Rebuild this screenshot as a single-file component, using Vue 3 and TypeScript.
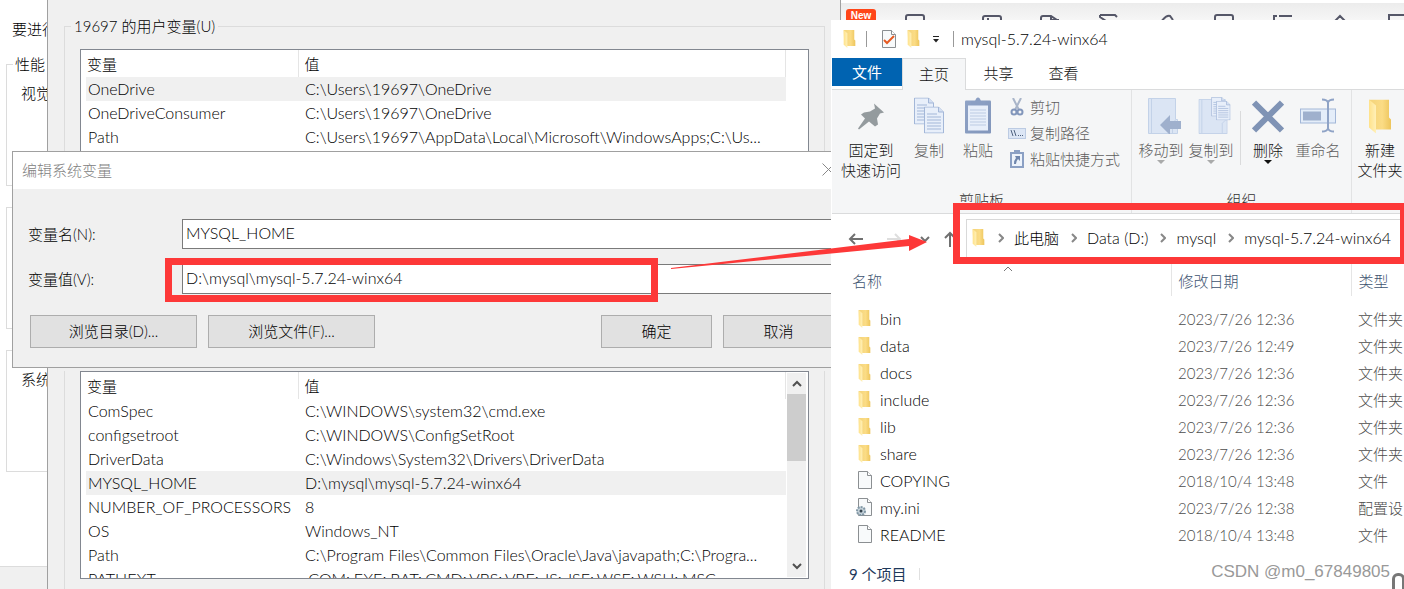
<script setup lang="ts">
interface Row { name: string; value: string; selected?: boolean }
interface FileRow { name: string; kind: 'folder' | 'file' | 'config'; date: string; type: string }

const userVars: Row[] = [
  { name: 'OneDrive', value: 'C:\\Users\\19697\\OneDrive', selected: true },
  { name: 'OneDriveConsumer', value: 'C:\\Users\\19697\\OneDrive' },
  { name: 'Path', value: 'C:\\Users\\19697\\AppData\\Local\\Microsoft\\WindowsApps;C:\\Us...' },
]
const systemVars: Row[] = [
  { name: 'ComSpec', value: 'C:\\WINDOWS\\system32\\cmd.exe' },
  { name: 'configsetroot', value: 'C:\\WINDOWS\\ConfigSetRoot' },
  { name: 'DriverData', value: 'C:\\Windows\\System32\\Drivers\\DriverData' },
  { name: 'MYSQL_HOME', value: 'D:\\mysql\\mysql-5.7.24-winx64', selected: true },
  { name: 'NUMBER_OF_PROCESSORS', value: '8' },
  { name: 'OS', value: 'Windows_NT' },
  { name: 'Path', value: 'C:\\Program Files\\Common Files\\Oracle\\Java\\javapath;C:\\Progra...' },
  { name: 'PATHEXT', value: '.COM;.EXE;.BAT;.CMD;.VBS;.VBE;.JS;.JSE;.WSF;.WSH;.MSC' },
]
const files: FileRow[] = [
  { name: 'bin', kind: 'folder', date: '2023/7/26 12:36', type: '文件夹' },
  { name: 'data', kind: 'folder', date: '2023/7/26 12:49', type: '文件夹' },
  { name: 'docs', kind: 'folder', date: '2023/7/26 12:36', type: '文件夹' },
  { name: 'include', kind: 'folder', date: '2023/7/26 12:36', type: '文件夹' },
  { name: 'lib', kind: 'folder', date: '2023/7/26 12:36', type: '文件夹' },
  { name: 'share', kind: 'folder', date: '2023/7/26 12:36', type: '文件夹' },
  { name: 'COPYING', kind: 'file', date: '2018/10/4 13:48', type: '文件' },
  { name: 'my.ini', kind: 'config', date: '2023/7/26 12:38', type: '配置设' },
  { name: 'README', kind: 'file', date: '2018/10/4 13:48', type: '文件' },
]
const crumbs = ['此电脑', 'Data (D:)', 'mysql', 'mysql-5.7.24-winx64']
const toolGlyphs = [
  'M-8 6h14',
  'M1 8V3q0-2 2-2h14q2 0 2 2v5',
  'M1 8V4q0-2 2-2h14q2 0 2 2v4M5 5h2',
  'M1 8V4q0-2 2-2h8l6 4v2M11 2v4h8',
  'M2 1h15l2 2M2 1v2l6 4',
  'M5 8q5-7 9-6l3 4',
  'M1 8V3q0-2 2-2h14q2 0 2 2v5',
  'M2 1v7M7 2h13M1 2h4',
  'M4 8l6-6 6 6M8 7h4',
  'M1 8V1h20M12 7h6V5',
]
</script>

<template>
  <main class="desktop">
    <section class="system-window">
      <p class="notice">要进行</p>
      <fieldset class="perf"><legend>性能</legend><span>视觉</span></fieldset>
      <fieldset class="profiles"></fieldset>
      <fieldset class="startup"><span>系统</span></fieldset>
      <footer></footer>
    </section>

    <nav class="toolstrip">
      <button v-for="(d, i) in toolGlyphs" :key="i" type="button" :aria-label="`tool ${i + 1}`">
        <svg viewBox="0 0 20 8" width="20" height="8"><path :d="d" /></svg>
      </button>
      <span class="new-badge">New</span>
    </nav>

    <section class="env-window">
      <fieldset class="user-group">
        <legend>19697 的用户变量(U)</legend>
        <div class="listbox">
          <table class="vars">
            <thead><tr><th class="var-name">变量</th><th>值</th></tr></thead>
            <tbody>
              <tr v-for="r in userVars" :key="r.name" :class="{ selected: r.selected }">
                <td>{{ r.name }}</td><td>{{ r.value }}</td>
              </tr>
            </tbody>
          </table>
        </div>
      </fieldset>
      <fieldset class="system-group">
        <div class="listbox">
          <table class="vars">
            <thead><tr><th class="var-name">变量</th><th>值</th></tr></thead>
            <tbody>
              <tr v-for="r in systemVars" :key="r.name" :class="{ selected: r.selected }">
                <td>{{ r.name }}</td><td>{{ r.value }}</td>
              </tr>
            </tbody>
          </table>
          <div class="scrollbar">
            <button type="button" aria-label="向上"><svg viewBox="0 0 10 7" width="10" height="7"><path d="M1 6l4-4 4 4" /></svg></button>
            <div class="thumb"></div>
            <button type="button" class="down" aria-label="向下"><svg viewBox="0 0 10 7" width="10" height="7"><path d="M1 1l4 4 4-4" /></svg></button>
          </div>
        </div>
      </fieldset>
    </section>

    <section class="dialog">
      <header>
        <h2>编辑系统变量</h2>
        <button type="button" aria-label="关闭"><svg viewBox="0 0 13 13" width="13" height="13"><path d="M.5.5l12 12M12.500.5l-12 12" /></svg></button>
      </header>
      <form @submit.prevent>
        <label for="var-name">变量名(N):</label>
        <input id="var-name" type="text" value="MYSQL_HOME" />
        <label for="var-value">变量值(V):</label>
        <input id="var-value" type="text" value="D:\mysql\mysql-5.7.24-winx64" />
        <div class="actions">
          <button type="button" class="wide">浏览目录(D)...</button>
          <button type="button" class="wide">浏览文件(F)...</button>
          <span class="fill"></span>
          <button type="submit">确定</button>
          <button type="button">取消</button>
        </div>
      </form>
    </section>

    <section class="explorer">
      <svg class="defs" width="0" height="0" aria-hidden="true">
        <defs>
          <linearGradient id="fold" x1="0" x2="1"><stop offset="0" stop-color="#f3d37a" /><stop offset=".6" stop-color="#fbdc85" /><stop offset="1" stop-color="#edc55c" /></linearGradient>
          <linearGradient id="flap" x1="0" x2="1"><stop offset="0" stop-color="#ffe28a" /><stop offset="1" stop-color="#fff0b8" /></linearGradient>
          <linearGradient id="board" x1="0" y1="0" x2="1" y2="1"><stop offset="0" stop-color="#8fa3c6" /><stop offset="1" stop-color="#8296bb" /></linearGradient>
          <symbol id="folder" viewBox="0 0 24 34"><path d="M1 0h20v18l2 2v10H8L2 24z" fill="url(#fold)" /><path d="M1 0l7 6v28l-7-6z" fill="url(#flap)" /></symbol>
          <symbol id="page" viewBox="0 0 16 19"><path d="M1.500.5h9l4 4v13h-13z" fill="#f8fafb" stroke="#8b8f92" /><path d="M10.500.5v4h4" fill="#fff" stroke="#8b8f92" /></symbol>
          <symbol id="doc" viewBox="0 0 20 27"><path d="M.5.5h14l5 5v21H.5z" fill="#e8effa" stroke="#a3b7d8" /><path d="M14.500.5v5h5" fill="#d5e0f2" stroke="#a3b7d8" /><path d="M3 7.500h10M3 10.500h14M3 13.500h14M3 16.500h14M3 19.500h14M3 22.500h14" stroke="#a3b7d8" /></symbol>
          <symbol id="bluefolder" viewBox="0 0 30 36"><path d="M.5.5h27v21h2v14H.5z" fill="#dbe5f4" stroke="#c3d2e8" /><path d="M3.500 1v34" stroke="#c3d2e8" /><path d="M24.500 35V25l3-3" fill="none" stroke="#c3d2e8" /></symbol>
        </defs>
      </svg>
      <header class="titlebar">
        <svg class="folder-icon" width="13" height="18"><use href="#folder" /></svg>
        <i class="bar"></i>
        <svg class="check-icon" viewBox="0 0 16 19" width="16" height="19"><use href="#page" width="16" height="19" /><path d="M3 10l3 3 7-7" fill="none" stroke="#e65a22" stroke-width="2" /></svg>
        <svg class="folder-icon second" width="13" height="18"><use href="#folder" /></svg>
        <svg class="caret" viewBox="0 0 8 7" width="8" height="7"><path d="M1 .5h6" stroke="#222" /><path d="M1 3h6L4 6.500z" fill="#222" /></svg>
        <i class="bar title-bar"></i>
        <h1>mysql-5.7.24-winx64</h1>
      </header>
      <nav class="tabs">
        <button type="button" class="file">文件</button>
        <button type="button" class="active">主页</button>
        <button type="button">共享</button>
        <button type="button">查看</button>
      </nav>
      <div class="ribbon">
        <div class="group clip">
          <div class="tools">
            <button type="button" class="tool pin">
              <svg viewBox="0 0 26 36" width="26" height="36"><path d="M16 6l10 9-4 1-3 5 1 6-3 2-6-5L1 32l-1-1 7-10-4-4 3-2 6-1 5-3z" fill="#949b9e" /></svg>
              <span>固定到<br />快速访问</span>
            </button>
            <button type="button" class="tool copy dim">
              <svg viewBox="0 0 30 36" width="30" height="36"><use href="#doc" width="20" height="27" /><use href="#doc" x="10" y="9" width="20" height="27" /></svg>
              复制
            </button>
            <button type="button" class="tool paste dim">
              <svg viewBox="0 0 26 36" width="26" height="36"><rect y="3" width="26" height="33" rx="1" fill="url(#board)" /><path d="M3 8h20v25H3z" fill="#e8effa" /><path d="M6 7V4h4q1-4 3-4t3 4h4v3z" fill="#8b9fc3" /><path d="M5 12.500h16M5 15.500h16M5 18.500h16M5 21.500h16M5 24.500h16M5 27.500h16" stroke="#bccbe3" /></svg>
              粘贴
            </button>
            <div class="small-tools">
              <button type="button"><svg viewBox="0 0 18 18" width="18" height="18"><path d="M5 0l6 12M13 0L7 12" stroke="#a9b5c9" stroke-width="2" /><circle cx="6" cy="14" r="2.500" fill="none" stroke="#8296bb" stroke-width="2" /><circle cx="12" cy="14" r="2.500" fill="none" stroke="#8296bb" stroke-width="2" /></svg>剪切</button>
              <button type="button"><svg viewBox="0 0 18 18" width="18" height="18"><rect x=".5" y="4.500" width="17" height="10" fill="#dce6f5" stroke="#bccbe3" /><path d="M3 6l2 6M6 6l2 6M10 11.500h1M12 11.500h1M14 11.500h1" stroke="#4f627f" fill="none" /></svg>复制路径</button>
              <button type="button"><svg viewBox="0 0 18 18" width="18" height="18"><path d="M2 2h14v16H2zM6 0h6v3H6z" fill="#8ba0c4" /><path d="M4 4h10v12H4z" fill="#edf3fb" /><path d="M7 6h5v5l-2-2q-2 2-2 5H6q0-4 2-6z" fill="#6f86ad" /></svg>粘贴快捷方式</button>
            </div>
          </div>
          <p>剪贴板</p>
        </div>
        <div class="group organize">
          <div class="tools">
            <button type="button" class="tool move dim"><svg viewBox="0 0 33 37" width="33" height="37"><use href="#bluefolder" y="1" width="30" height="36" /><path d="M12 28l10-10v6h11v8H22v6z" fill="#9fb0cd" /></svg>移动到<i class="drop"></i></button>
            <button type="button" class="tool copyto dim"><svg viewBox="0 0 33 38" width="33" height="38"><use href="#bluefolder" y="2" width="30" height="36" /><use href="#doc" x="13" width="15" height="20" /><use href="#doc" x="18" y="4" width="15" height="20" /></svg>复制到<i class="drop"></i></button>
            <i class="split"></i>
            <button type="button" class="tool delete"><svg viewBox="0 0 32 36" width="32" height="36"><path d="M2 5l28 28M30 5L2 33" stroke="#7f93b5" stroke-width="6" /></svg>删除<i class="drop"></i></button>
            <button type="button" class="tool rename dim"><svg viewBox="0 0 36 36" width="36" height="36"><rect x=".5" y="11.500" width="35" height="14" fill="#e4edf9" stroke="#a3b7d8" /><path d="M3 14h18v9H3z" fill="#9fb0cd" /><path d="M28 4v28M22 2q5 0 6 3 1-3 6-3M22 34q5 0 6-3 1 3 6 3" fill="none" stroke="#8fa3c6" stroke-width="2" /></svg>重命名</button>
          </div>
          <p>组织</p>
        </div>
        <div class="group create">
          <div class="tools">
            <button type="button" class="tool"><svg viewBox="0 0 24 36" width="24" height="36"><use href="#folder" y="2" width="24" height="34" /></svg><span>新建<br />文件夹</span></button>
          </div>
        </div>
      </div>
      <div class="navbar">
        <button type="button" aria-label="后退"><svg viewBox="0 0 16 16" width="16" height="16"><path d="M15 8H2M7 3L2 8l5 5" stroke="#707070" /></svg></button>
        <button type="button" class="forward" aria-label="前进"><svg viewBox="0 0 16 16" width="16" height="16"><path d="M1 8h13M9 3l5 5-5 5" stroke="#dedede" /></svg></button>
        <button type="button" class="recent" aria-label="最近"><svg viewBox="0 0 10 16" width="10" height="16"><path d="M1 6l4 4 4-4" stroke="#707070" /></svg></button>
        <button type="button" class="up" aria-label="上移"><svg viewBox="0 0 16 16" width="16" height="16"><path d="M8 16V2M3 7l5-5 5 5" stroke="#707070" /></svg></button>
        <div class="address">
          <svg class="folder-icon" width="13" height="18"><use href="#folder" /></svg>
          <template v-for="c in crumbs" :key="c">
            <svg class="chev" viewBox="0 0 6 10" width="6" height="10"><path d="M1 1l4 4-4 4" /></svg>
            <a href="#">{{ c }}</a>
          </template>
        </div>
      </div>
      <table class="files">
        <thead>
          <tr>
            <th class="col-name">名称<svg class="sort" viewBox="0 0 10 6" width="10" height="6"><path d="M1 5l4-4 4 4" /></svg></th>
            <th class="col-date">修改日期</th>
            <th>类型</th>
          </tr>
        </thead>
        <tbody>
          <tr v-for="f in files" :key="f.name">
            <td>
              <div class="file-cell">
                <svg v-if="f.kind === 'folder'" viewBox="0 0 21 22" width="21" height="22"><use href="#folder" x="2" y="2" width="13" height="18" /></svg>
                <svg v-else viewBox="0 0 21 22" width="21" height="22">
                  <use href="#page" x="1" y="1" width="16" height="19" />
                  <g v-if="f.kind === 'config'"><circle cx="5" cy="14" r="4" fill="#c5d2da" stroke="#8197a5" stroke-width="2" stroke-dasharray="2 1" /><circle cx="5" cy="14" r="1.500" fill="#34434d" /></g>
                </svg>
                {{ f.name }}
              </div>
            </td>
            <td>{{ f.date }}</td>
            <td>{{ f.type }}</td>
          </tr>
        </tbody>
      </table>
      <footer class="status">9 个项目<i></i></footer>
    </section>

    <div class="mark value-mark"></div>
    <div class="mark path-mark"></div>
    <svg class="arrow" viewBox="0 0 256 36" width="256" height="36"><path d="M0 34L238 5V1l18 7-18 9v-5L0 35z" /></svg>
    <span class="watermark">CSDN @m0_67849805</span>
    <i class="arch"></i>
  </main>
</template>

<style>
body { margin: 0; }
</style>

<style scoped>
* { box-sizing: border-box; }
.desktop {
  position: relative; height: 100vh; overflow: hidden; background: #fff; color: #000;
  font: 300 15px/20px Lato, "Noto Sans CJK SC", sans-serif;
}
button, input { font: inherit; color: inherit; }
button { padding: 0; border: 0; background: none; }
p, h1, h2 { margin: 0; font: inherit; }
fieldset { margin: 0; min-width: 0; }
svg { display: block; flex: none; fill: none; }
table { border-collapse: collapse; table-layout: fixed; }
th { font-weight: inherit; text-align: left; }
th, td { white-space: nowrap; overflow: hidden; }

.system-window { position: absolute; left: 0; top: 0; bottom: 0; width: 96px; white-space: nowrap; display: flex; flex-direction: column; }
.notice { padding: 19px 0 0 12px; height: 54px; }
.system-window fieldset { border: 1px solid #dcdcdc; margin: 0 0 21px 6px; padding: 0 0 0 14px; height: 122px; }
.system-window legend { margin-left: -8px; padding: 0 2px; }
.system-window .perf { height: 132px; padding-top: 9px; }
.system-window .startup { padding-top: 18px; }
.system-window footer { margin-top: auto; height: 23px; background: #f0f0f0; border-top: 1px solid #dcdcdc; }

.toolstrip { position: absolute; left: 841px; right: 0; top: 0; height: 20px; padding: 11px 0 0 6px; display: flex; gap: 38px; border-top: 3px solid #fff; background: linear-gradient(#ececec, #f6f6f6); overflow: hidden; }
.toolstrip button { flex: none; width: 20px; height: 8px; }
.toolstrip button:nth-child(3) { margin-left: 19px; }
.toolstrip path { stroke: #555768; stroke-width: 2; }
.new-badge { position: absolute; left: 5px; top: 6px; width: 30px; height: 14px; border-radius: 3px; background: #ff4619; color: #fff; font: 700 10px/13px "Liberation Sans", sans-serif; text-align: center; }

.env-window { position: absolute; left: 47px; top: 0; bottom: 0; width: 794px; padding: 16px 15px 0 16px; background: #f0f0f0; border: solid #a0a0a0; border-width: 0 1px; }
.env-window fieldset { border: 1px solid #dcdcdc; padding: 0 15px; }
.user-group { height: 330px; }
.user-group legend { padding: 0 3px; margin-left: -9px; }
.user-group .listbox { margin-top: 13px; height: 180px; }
.env-window .system-group { border-top: 0; margin-top: 25px; height: 300px; }
.listbox { position: relative; display: flex; background: #fff; border: 1px solid #828790; padding-left: 5px; overflow: hidden; }
.system-group .listbox { height: 208px; }
.vars { width: 700px; flex: none; height: max-content; }
.vars tr { height: 24px; }
.vars thead tr { height: 27px; }
.vars th { padding: 0 6px; border-right: 1px solid #e5e5e5; }
.vars th.var-name { width: 212px; padding-left: 1px; }
.vars td { padding: 0 7px; font-size: 16px; }
.vars td:first-child { padding-left: 2px; }
.vars .selected { background: #f0f0f0; }
.scrollbar { width: 19px; margin: 1px 2px 1px auto; background: #f0f0f0; display: flex; flex-direction: column; align-items: center; }
.scrollbar button { height: 21px; display: grid; place-items: center; }
.scrollbar .down { margin-top: auto; }
.scrollbar path { stroke: #505050; stroke-width: 2; }
.thumb { width: 100%; height: 67px; background: #cdcdcd; }

.dialog { position: absolute; left: 12px; top: 151px; width: 838px; border: 1px solid #a0a0a0; background: #f0f0f0; }
.dialog header { height: 37px; padding: 0 14px 2px 9px; display: flex; align-items: center; justify-content: space-between; background: #fff; color: #808080; }
.dialog header path { stroke: #888; }
.dialog form { display: grid; grid-template-columns: 154px 1fr; row-gap: 15px; align-items: center; padding: 30px 15px 19px; }
.dialog input { min-width: 0; height: 30px; padding: 0 3px 4px; border: 1px solid #7a7a7a; background: #fff; outline: 0; font-size: 16px; }
.actions { grid-column: 1 / -1; display: flex; gap: 11px; padding-left: 2px; margin-top: 6px; }
.actions button { width: 111px; height: 33px; padding-bottom: 2px; border: 1px solid #adadad; background: #e1e1e1; }
.actions .wide { width: 167px; }
.fill { flex: 1; }

.explorer { position: absolute; left: 831px; right: 0; top: 20px; bottom: 0; padding-left: 1px; background: #fff; overflow: hidden; white-space: nowrap; display: flex; flex-direction: column; }
.defs { position: absolute; }
.titlebar { display: flex; align-items: center; height: 38px; padding-left: 11px; }
.titlebar h1 { font-size: 16px; }
.bar { width: 1px; height: 16px; margin: 0 14px 0 10px; background: #999; }
.titlebar .second { margin-left: 10px; }
.caret { margin-left: 12px; }
.titlebar .title-bar { margin: 0 7px 0 13px; }
.tabs { display: flex; height: 32px; border-bottom: 1px solid #dadbdc; color: #111; }
.tabs button { width: 65px; height: 29px; }
.tabs .file { width: 70px; height: 28px; background: #0063b1; color: #fff; font-weight: 400; }
.tabs .active { width: 64px; height: 32px; padding-bottom: 2px; background: #f5f6f7; border: 1px solid #dadbdc; border-bottom: 0; }
.ribbon { display: flex; height: 124px; background: #f5f6f7; border-bottom: 1px solid #dadbdc; overflow: hidden; }
.group { flex: none; display: flex; flex-direction: column; border-right: 1px solid #e2e3e4; }
.group p { margin-top: 1px; text-align: center; color: #333; }
.clip { width: 300px; }
.organize { width: 220px; }
.create { border: 0; }
.tools { display: flex; height: 99px; padding-top: 7px; }
.tool { display: flex; flex-direction: column; align-items: center; height: 88px; width: 50px; line-height: 20px; color: #111; }
.tool svg { margin-bottom: 6px; height: 37px; }
.dim, .small-tools { color: #5d5d5d; }
.pin { width: 78px; }
.copy { width: 38px; }
.paste { width: 60px; }
.small-tools { display: flex; flex-direction: column; margin-top: -3px; }
.small-tools button { display: flex; align-items: center; gap: 4px; height: 26px; }
.organize .tools { padding-left: 4px; }
.drop { border: 4px solid transparent; border-top-color: currentColor; border-bottom: 0; opacity: .5; }
.delete .drop { opacity: 1; }
.split { width: 1px; height: 54px; margin: 14px 2px 0 4px; background: #dadbdc; }
.move svg, .copyto svg { margin-left: 6px; }
.create .tool { width: 56px; }
.navbar { display: flex; align-items: center; height: 50px; padding-left: 16px; }
.navbar path { stroke-width: 2; }
.forward { margin-left: 22px; }
.recent { margin-left: 18px; }
.up { margin-left: 12px; }
.address { display: flex; align-items: center; flex: 1; height: 40px; margin-left: 8px; padding: 0 0 2px 5px; border: 1px solid #d9d9d9; border-right: 0; }
.address a { color: #000; text-decoration: none; margin-left: 10px; font-size: 16px; }
.address a:first-of-type { font-size: 15px; }
.address .chev { margin-left: 12px; }
.address .folder-icon + .chev { margin-left: 13px; }
.chev path { stroke: #888; }
.files { width: 100%; color: #4c4c4c; }
.files thead tr { height: 32px; color: #3d5370; }
.files th { padding: 1px 7px 0; border-right: 1px solid #e5e5e5; }
.files th:last-child { border: 0; }
.files .col-name { width: 339px; padding-left: 20px; position: relative; }
.files .col-date { width: 180px; }
.sort { position: absolute; left: 171px; top: 2px; }
.sort path { stroke: #777; }
.files tbody::before { content: ""; display: block; height: 9px; }
.files tbody tr { height: 27px; }
.files td { padding: 0 7px; }
.files td:first-child { padding-left: 24px; }
.file-cell { display: flex; align-items: center; gap: 3px; color: #000; font-size: 16px; }
.status { display: flex; align-items: center; margin-top: auto; height: 30px; padding-left: 17px; color: #1e395b; font-weight: 400; }
.status i { width: 1px; height: 12px; margin-left: 12px; background: #e0e0e0; }

.mark { position: absolute; border: 7px solid #fd3838; }
.value-mark { left: 165px; top: 258px; width: 493px; height: 44px; }
.path-mark { left: 953px; right: -3px; top: 203px; height: 61px; }
.arrow { position: absolute; left: 671px; top: 234px; }
.arrow path { fill: #fd3838; }
.watermark { position: absolute; right: 14px; bottom: 7px; color: #999; font: 400 17px/20px "Liberation Sans", sans-serif; }
.arch { position: absolute; right: -1px; bottom: -6px; width: 13px; height: 22px; border: 3px solid #777; border-radius: 6px; }
</style>
